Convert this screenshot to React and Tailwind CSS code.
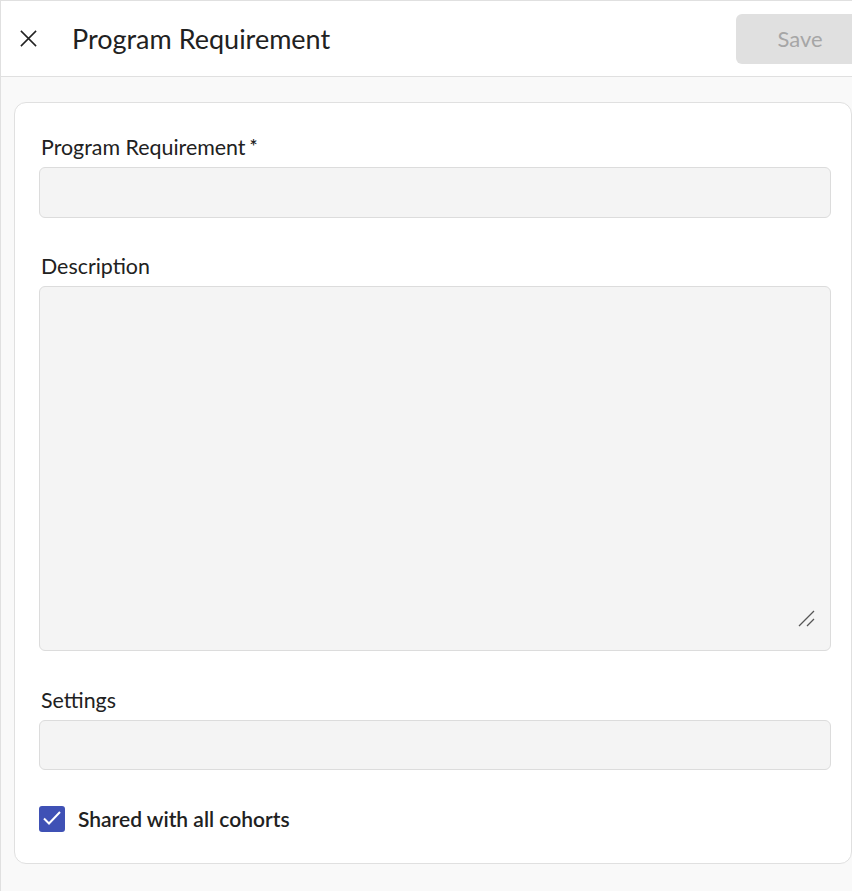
import React from "react";

export default function App() {
  return (
    <div
      className="w-[852px] h-[891px] overflow-hidden bg-[#f9f9f9] border-l border-t border-[#e0e0e0]"
      style={{ fontFamily: "Lato, 'Noto Sans', sans-serif" }}
    >
      <div className="w-[870px]">
        <header className="h-[76px] bg-white border-b border-[#e0e0e0] flex items-center">
          <button className="w-[54px] h-[50px] flex items-center justify-center text-[#222]">
            <svg width="19" height="19" viewBox="0 0 20 20" fill="none" stroke="#222" strokeWidth="1.6">
              <path d="M2 2 L18 18 M18 2 L2 18" />
            </svg>
          </button>
          <h1 className="ml-[17px] text-[27px] leading-[32px] text-[#212121]">Program Requirement</h1>
          <div className="flex-1" />
          <button className="w-[128px] h-[50px] rounded-[6px] bg-[#e0e0e0] text-[#a6a6a6] text-[22px] mr-[7px]">
            Save
          </button>
        </header>
        <div className="ml-[13px] mt-[25px] w-[838px] bg-white border border-[#e0e0e0] rounded-[12px] pl-[24px] pr-[20px] pt-[32px] pb-[31px]">
          <label className="flex items-start h-[24px] leading-[24px] text-[21.4px] text-[#212121] pl-[2px]">
            Program Requirement
            <span className="ml-[4px] mt-[3px] text-[19px] leading-[16px] font-semibold">*</span>
          </label>
          <div className="mt-[8px] h-[51px] w-[792px] bg-[#f4f4f4] border border-[#dcdcdc] rounded-[6px]" />
          <label className="mt-[36px] block h-[24px] leading-[24px] text-[21.4px] text-[#212121] pl-[2px]">
            Description
          </label>
          <div className="relative mt-[8px] h-[365px] w-[792px] bg-[#f4f4f4] border border-[#dcdcdc] rounded-[6px]">
            <svg className="absolute right-[14px] bottom-[22px]" width="18" height="18" viewBox="0 0 18 18" fill="none" stroke="#555" strokeWidth="1.3">
              <path d="M1 16 L16 1 M9 16 L16 9" />
            </svg>
          </div>
          <label className="mt-[37px] block h-[24px] leading-[24px] text-[21.4px] text-[#212121] pl-[2px]">
            Settings
          </label>
          <div className="mt-[8px] h-[50px] w-[792px] bg-[#f4f4f4] border border-[#dcdcdc] rounded-[6px]" />
          <div className="mt-[36px] flex items-center h-[26px]">
            <div className="w-[26px] h-[26px] rounded-[3px] bg-[#3f51b5] shrink-0">
              <svg width="26" height="26" viewBox="0 0 26 26" fill="none" stroke="white" strokeWidth="2">
                <path d="M5 12.5 L10 17.5 L21 6" />
              </svg>
            </div>
            <span className="ml-[13px] text-[21px] font-semibold text-[#212121]">Shared with all cohorts</span>
          </div>
        </div>
      </div>
    </div>
  );
}
